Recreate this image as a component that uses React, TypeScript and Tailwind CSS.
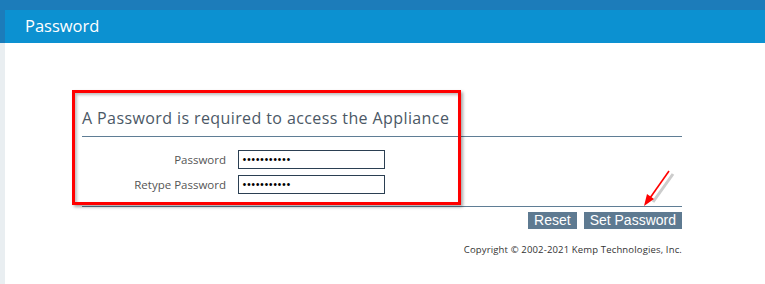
export default function App() {
  return (
    <div className="w-[765px] h-[284px] bg-white overflow-hidden font-['Open_Sans',sans-serif]">
      <div className="h-[10px] bg-[#1c7cba]" />
      <div className="flex h-[274px]">
        {/* left strip */}
        <div className="w-[5px] flex flex-col">
          <div className="h-[33px] bg-[#1c7cba]" />
          <div className="flex-1 bg-[#e9eef1]" />
        </div>

        <div className="flex-1 flex flex-col">
          <div className="h-[33px] bg-[#0c91d1] flex items-center pl-[20px]">
            <span className="text-white text-[16.5px] leading-none">Password</span>
          </div>

          <div className="relative w-[600px] ml-[77px] pt-[64px]">
            <h2 className="text-[16px] leading-[22px] text-[#4b5866] tracking-[0.4px] pb-[7px] border-b border-[#5f7d95]">
              A Password is required to access the Appliance
            </h2>

            <div className="grid grid-cols-[144px_147px] gap-x-[12px] gap-y-[6px] items-center mt-[13px]">
              <label className="text-right text-[11.5px] text-[#555]">Password</label>
              <input
                type="password"
                defaultValue="abcdefghijk"
                className="h-[19px] border border-[#2b3f52] px-[3px] text-[13px] tracking-[-0.5px] text-black outline-none"
              />
              <label className="text-right text-[11.5px] text-[#555]">Retype Password</label>
              <input
                type="password"
                defaultValue="abcdefghijk"
                className="h-[19px] border border-[#2b3f52] px-[3px] text-[13px] tracking-[-0.5px] text-black outline-none"
              />
            </div>

            <div className="mt-[12px] border-t border-[#5f7d95]" />

            <div className="flex justify-end gap-[7px] mt-[5px]">
              <button className="h-[17px] px-[6px] bg-[#5e7a91] text-white text-[14px] leading-[17px] font-['Liberation_Sans',sans-serif]">
                Reset
              </button>
              <button className="h-[17px] px-[6px] bg-[#5e7a91] text-white text-[14px] leading-[17px] font-['Liberation_Sans',sans-serif]">
                Set Password
              </button>
            </div>

            <p className="mt-[14px] text-right text-[9.5px] text-[#333] tracking-[0.15px]">
              Copyright © 2002-2021 Kemp Technologies, Inc.
            </p>

            {/* red highlight annotation */}
            <div className="absolute left-[-10px] top-[47px] w-[389px] h-[115px] border-[3px] border-[#ff0000] shadow-[2px_2px_3px_rgba(0,0,0,0.35),inset_2px_2px_3px_rgba(0,0,0,0.25)] pointer-events-none" />

            {/* red arrow annotation */}
            <svg className="absolute left-[555px] top-[122px] pointer-events-none" width="40" height="45" viewBox="0 0 40 45">
              <line x1="34" y1="7" x2="14" y2="35" stroke="#ccc" strokeWidth="3" transform="translate(2 2)" />
              <line x1="32" y1="6" x2="13" y2="33" stroke="#ff0000" strokeWidth="1.6" />
              <polygon points="7,41 10,29 17,34" fill="#ff0000" />
            </svg>
          </div>
        </div>
      </div>
    </div>
  );
}
